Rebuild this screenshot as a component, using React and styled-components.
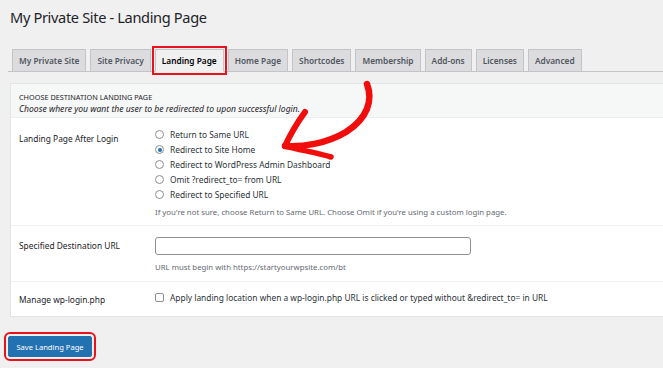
import React from 'react';
import styled, { createGlobalStyle } from 'styled-components';

const GlobalStyle = createGlobalStyle`
    html, body {
        margin: 0;
        padding: 0;
        background: #f0f0f1;
        overflow: hidden;
    }
    body {
        font-family: "Noto Sans", "Open Sans", sans-serif;
        color: #1d2327;
    }
`;

const Page = styled.div`
    position: relative;
    width: 663px;
    height: 368px;
    padding-left: 8px;
    box-sizing: border-box;
`;

const Title = styled.h1`
    margin: 0;
    padding: 6px 0 0 2px;
    font-size: 14.6px;
    letter-spacing: -0.35px;
    line-height: 22px;
    font-weight: 400;
    color: #1d2327;
`;

const TabBar = styled.nav`
    display: flex;
    margin-top: 21px;
    border-bottom: 1px solid #c3c4c7;
    margin-right: -8px;
`;

const Tab = styled.span`
    margin-left: 4px;
    margin-bottom: -1px;
    height: 23px;
    padding: 0 6px;
    box-sizing: border-box;
    display: flex;
    align-items: center;
    font-size: 8.3px;
    font-weight: 600;
    color: ${p => (p.$active ? '#000' : '#50575e')};
    background: ${p => (p.$active ? '#f0f0f1' : '#dcdcde')};
    border: 1px solid #c3c4c7;
    border-bottom-color: ${p => (p.$active ? '#f0f0f1' : '#c3c4c7')};
    outline: ${p => (p.$active ? '2px solid #e8121c' : 'none')};
    outline-offset: 1px;
    white-space: nowrap;
`;

const Panel = styled.section`
    margin: 11px -20px 0 2px;
    background: #fff;
    border: 1px solid #e2e4e7;
`;

const PanelHead = styled.header`
    background: #f6f7f7;
    padding: 8px 8px 6px;
    height: 34px;
    box-sizing: border-box;
    border-bottom: 1px solid #eceef0;
`;

const HeadTitle = styled.div`
    font-size: 7.3px;
    line-height: 11px;
    text-transform: uppercase;
    color: #1d2327;
`;

const HeadNote = styled.div`
    font-size: 8.6px;
    line-height: 13px;
    font-style: italic;
    color: #1d2327;
`;

const Row = styled.div`
    display: grid;
    grid-template-columns: 136px 1fr;
    padding: ${p => p.$pad || '10px 8px'};
    border-top: ${p => (p.$first ? 'none' : '1px solid #f0f0f1')};
`;

const Label = styled.div`
    font-size: 8.4px;
    line-height: 14px;
    padding-top: ${p => p.$top || '2px'};
    color: #1d2327;
`;

const Field = styled.div`
    display: flex;
    flex-direction: column;
`;

const Option = styled.label`
    display: flex;
    align-items: center;
    gap: 6px;
    height: 15px;
    font-size: 8.4px;
    color: #2c3338;
    white-space: nowrap;
`;

const Radio = styled.span`
    width: 9px;
    height: 9px;
    border: 1px solid #8c8f94;
    border-radius: 50%;
    box-sizing: border-box;
    display: flex;
    align-items: center;
    justify-content: center;
    background: #fff;
    flex-shrink: 0;

    &::after {
        content: '';
        width: 4px;
        height: 4px;
        border-radius: 50%;
        background: ${p => (p.$checked ? '#2271b1' : 'transparent')};
    }
`;

const Check = styled.span`
    width: 9px;
    height: 9px;
    border: 1px solid #8c8f94;
    border-radius: 2px;
    box-sizing: border-box;
    background: #fff;
    flex-shrink: 0;
`;

const Help = styled.p`
    margin: ${p => p.$margin || '5px 0 0'};
    font-size: 7.8px;
    line-height: 11px;
    color: #646970;
    white-space: nowrap;
`;

const Input = styled.div`
    width: 316px;
    height: 18px;
    border: 1px solid #8c8f94;
    border-radius: 3px;
    box-sizing: border-box;
    background: #fff;
`;

const Footer = styled.div`
    display: flex;
    padding: 19px 0 0 0;
`;

const SaveButton = styled.button`
    height: 21px;
    width: 84px;
    padding: 0;
    background: #2271b1;
    border: 1px solid #2271b1;
    border-radius: 2px;
    color: #fff;
    font-family: "Noto Sans", "Open Sans", sans-serif;
    font-size: 7.6px;
    outline: 2px solid #e8121c;
    outline-offset: 2px;
`;

const Arrow = styled.svg`
    position: absolute;
    left: 0;
    top: 0;
    pointer-events: none;
`;

const tabs = [
    'My Private Site',
    'Site Privacy',
    'Landing Page',
    'Home Page',
    'Shortcodes',
    'Membership',
    'Add-ons',
    'Licenses',
    'Advanced',
];

const options = [
    'Return to Same URL',
    'Redirect to Site Home',
    'Redirect to WordPress Admin Dashboard',
    'Omit ?redirect_to= from URL',
    'Redirect to Specified URL',
];

const App = () => (
    <Page>
        <GlobalStyle />
        <Title>My Private Site - Landing Page</Title>
        <TabBar>
            {tabs.map(t => (
                <Tab key={t} $active={t === 'Landing Page'}>{t}</Tab>
            ))}
        </TabBar>
        <Panel>
            <PanelHead>
                <HeadTitle>Choose Destination Landing Page</HeadTitle>
                <HeadNote>Choose where you want the user to be redirected to upon successful login.</HeadNote>
            </PanelHead>
            <Row $first $pad="9px 8px 7px">
                <Label $top="5px">Landing Page After Login</Label>
                <Field>
                    {options.map((o, i) => (
                        <Option key={o}>
                            <Radio $checked={i === 1} />
                            {o}
                        </Option>
                    ))}
                    <Help>If you're not sure, choose Return to Same URL. Choose Omit if you're using a custom login page.</Help>
                </Field>
            </Row>
            <Row $pad="11px 8px 8px">
                <Label $top="2px">Specified Destination URL</Label>
                <Field>
                    <Input />
                    <Help $margin="7px 0 0">URL must begin with https://startyourwpsite.com/bt</Help>
                </Field>
            </Row>
            <Row $pad="8px 8px 9px">
                <Label $top="3px">Manage wp-login.php</Label>
                <Field>
                    <Option>
                        <Check />
                        Apply landing location when a wp-login.php URL is clicked or typed without &amp;redirect_to= in URL
                    </Option>
                </Field>
            </Row>
        </Panel>
        <Footer>
            <SaveButton>Save Landing Page</SaveButton>
        </Footer>
        <Arrow width="663" height="368" viewBox="0 0 663 368">
            <g fill="none" stroke="#f20d0d" strokeLinecap="round" strokeLinejoin="round">
                <path d="M367 84 C373 100, 368 118, 346 132 C326 144, 302 147, 285 146" strokeWidth="6.5" />
                <path d="M305 112 C297 123, 290 135, 285 146" strokeWidth="6" />
                <path d="M285 146 C300 150, 318 153, 331 157" strokeWidth="5.5" />
            </g>
        </Arrow>
    </Page>
);

export default App;
